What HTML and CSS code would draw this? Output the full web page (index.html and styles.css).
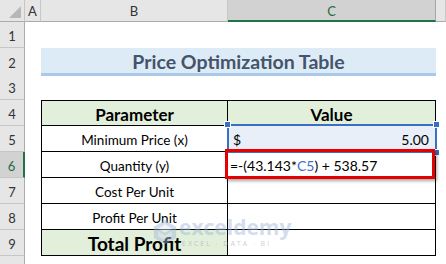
FILE: index.html
```html
<!DOCTYPE html>
<html lang="en">
<head>
    <meta charset="UTF-8">
    <title>Price Optimization Table</title>
    <link rel="stylesheet" href="styles.css">
</head>
<body>
    <div class="sheet">
        <div class="row head-row">
            <div class="corner"><span class="tri"></span></div>
            <div class="col-head">A</div>
            <div class="col-head">B</div>
            <div class="col-head active">C</div>
            <div class="col-head"></div>
        </div>

        <div class="row">
            <div class="row-head">1</div>
        </div>

        <div class="row">
            <div class="row-head">2</div>
            <div></div>
            <div class="title">Price Optimization Table</div>
        </div>

        <div class="row">
            <div class="row-head">3</div>
        </div>

        <div class="row">
            <div class="row-head">4</div>
            <div></div>
            <div class="cell b top green bold-head">Parameter</div>
            <div class="cell c top green bold-head">Value</div>
        </div>

        <div class="row">
            <div class="row-head">5</div>
            <div></div>
            <div class="cell b">Minimum Price (x)</div>
            <div class="cell c selected">
                <span>$</span><span>5.00</span>
                <i class="handle tl"></i><i class="handle tr"></i><i class="handle br"></i>
            </div>
        </div>

        <div class="row">
            <div class="row-head active">6</div>
            <div></div>
            <div class="cell b">Quantity (y)</div>
            <div class="cell c formula">
                <span class="expr">=-(43.143*<span class="ref">C5</span>) + 538.57</span>
                <i class="mark"></i>
            </div>
        </div>

        <div class="row">
            <div class="row-head">7</div>
            <div></div>
            <div class="cell b">Cost Per Unit</div>
            <div class="cell c"></div>
        </div>

        <div class="row">
            <div class="row-head">8</div>
            <div></div>
            <div class="cell b">Profit Per Unit</div>
            <div class="cell c"></div>
        </div>

        <div class="row">
            <div class="row-head">9</div>
            <div></div>
            <div class="cell b green total">Total Profit</div>
            <div class="cell c"></div>
        </div>

        <div class="row">
            <div class="row-head"></div>
        </div>

        <div class="watermark">
            <svg width="24" height="26" viewBox="0 0 28 30">
                <path d="M14 1 L27 9 L27 22 L14 29 L1 22 L1 9 Z" fill="#9fb6d9"/>
                <path d="M14 6 L22 11 L14 16 L6 11 Z" fill="#ffffff" opacity="0.7"/>
                <path d="M6 14 L14 19 L22 14 L22 20 L14 25 L6 20 Z" fill="#ffffff" opacity="0.45"/>
            </svg>
            <div class="wm-text">
                <div class="wm-name">exceldemy</div>
                <div class="wm-tag">EXCEL · DATA · BI</div>
            </div>
        </div>
    </div>
</body>
</html>
```

FILE: styles.css
```css
body {
    margin: 0;
    background: #ffffff;
    font-family: Lato, "Open Sans", sans-serif;
    color: #000;
}

.sheet {
    position: relative;
    width: 446px;
    height: 264px;
    overflow: hidden;
}

.row {
    display: grid;
    grid-template-columns: 25px 16px 187px 208px 1fr;
    height: 26px;
}

.head-row {
    height: 22px;
}

.corner,
.col-head,
.row-head {
    background: #e6e6e6;
    color: #333;
    font-size: 13px;
    display: flex;
    align-items: center;
    justify-content: center;
    box-sizing: border-box;
}

.corner {
    position: relative;
    border-right: 1px solid #c6c6c6;
    border-bottom: 1px solid #ababab;
}

.corner .tri {
    position: absolute;
    right: 3px;
    bottom: 3px;
    width: 0;
    height: 0;
    border-left: 12px solid transparent;
    border-bottom: 12px solid #b7b7b7;
}

.col-head {
    border-right: 1px solid #c6c6c6;
    border-bottom: 1px solid #ababab;
    padding-top: 1px;
}

.col-head.active {
    background: #d2d2d2;
    color: #1e6b41;
    border-right: 1px solid #a6a6a6;
    border-bottom: 2px solid #217346;
}

.row-head {
    border-right: 1px solid #ababab;
    border-bottom: 1px solid #c6c6c6;
    padding-top: 2px;
}

.row-head.active {
    background: #d2d2d2;
    color: #1e6b41;
    border-right: 2px solid #217346;
}

.title {
    grid-column: 3 / 5;
    background: #ddebf7;
    border-bottom: 3px solid #a9c9e9;
    box-sizing: border-box;
    height: 28px;
    color: #44546a;
    font-weight: 700;
    font-size: 19.5px;
    display: flex;
    align-items: center;
    justify-content: center;
    padding-top: 2px;
}

.cell {
    box-sizing: border-box;
    height: 26px;
    border-bottom: 1px solid #000;
    border-right: 1px solid #000;
    display: flex;
    align-items: center;
    justify-content: center;
    font-size: 13.5px;
    padding-top: 2px;
}

.cell.b {
    border-left: 1px solid #000;
}

.cell.top {
    border-top: 1px solid #000;
}

.green {
    background: #e2efda;
}

.bold-head {
    font-weight: 700;
    font-size: 17px;
}

.total {
    font-weight: 700;
    font-size: 19px;
}

.selected {
    position: relative;
    background: #e8eff9;
    justify-content: space-between;
    padding: 2px 6px 0 5px;
    font-size: 14px;
}

.selected::before {
    content: "";
    position: absolute;
    left: -1px;
    top: -2px;
    right: -2px;
    bottom: -2px;
    border: 2px solid #3b6fc4;
}

.handle {
    position: absolute;
    width: 5px;
    height: 5px;
    background: #3b6fc4;
    border: 1px solid #fff;
    z-index: 2;
}

.handle.tl { left: -4px; top: -5px; }
.handle.tr { right: -5px; top: -5px; }
.handle.br { right: -5px; bottom: -5px; }

.formula {
    position: relative;
    justify-content: flex-start;
    padding-left: 2px;
    font-size: 14px;
    border-bottom: 2px solid #217346;
}

.expr {
    white-space: pre;
}

.ref {
    color: #3f6fcf;
}

.formula .mark {
    position: absolute;
    left: -3px;
    top: -3px;
    right: 0;
    bottom: -3px;
    border: 3px solid #e60000;
    box-shadow: 2px 2px 3px rgba(0, 0, 0, 0.35);
    z-index: 3;
}

.watermark {
    position: absolute;
    left: 153px;
    top: 217px;
    display: flex;
    align-items: center;
    gap: 2px;
    opacity: 0.45;
    pointer-events: none;
}

.wm-text {
    display: flex;
    flex-direction: column;
    line-height: 1;
}

.wm-name {
    font-family: "Open Sans", sans-serif;
    font-weight: 700;
    font-size: 21px;
    color: #9fb6d9;
}

.wm-tag {
    font-family: "Open Sans", sans-serif;
    font-size: 7px;
    color: #8d97a3;
    letter-spacing: 2px;
    margin-top: 2px;
    padding-left: 3px;
}
```
